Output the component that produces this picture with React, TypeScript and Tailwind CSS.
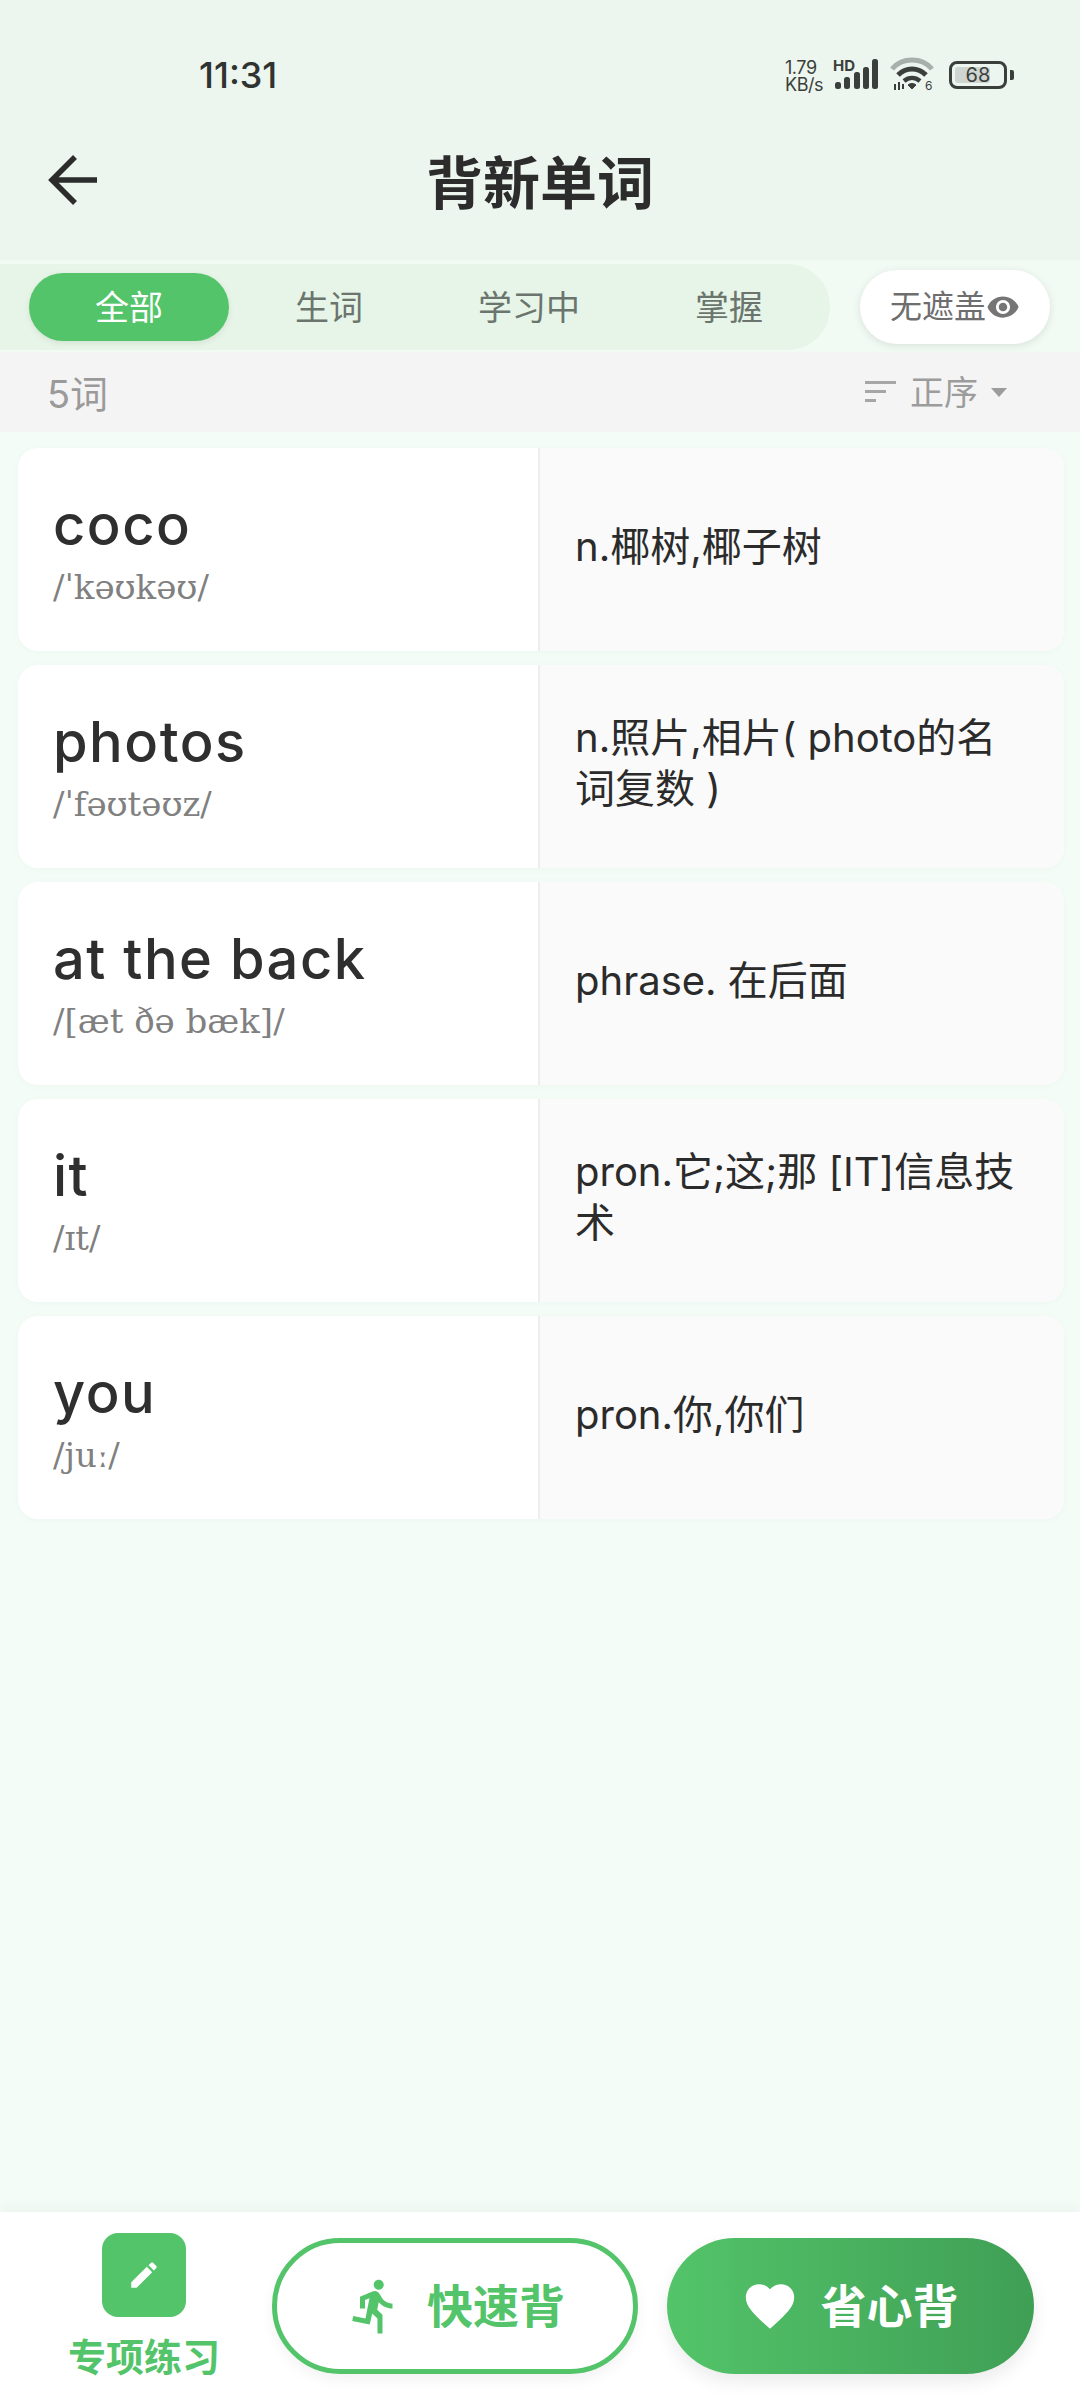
import { JSX } from "react";

const cjk = "font-['Inter','Noto_Sans_CJK_SC',sans-serif]";

const words = [
  { word: "coco", phonetic: "/ˈkəʊkəʊ/", mean: "n.椰树,椰子树" },
  { word: "photos", phonetic: "/ˈfəʊtəʊz/", mean: "n.照片,相片( photo的名词复数 )" },
  { word: "at the back", phonetic: "/[æt ðə bæk]/", mean: "phrase. 在后面" },
  { word: "it", phonetic: "/ɪt/", mean: "pron.它;这;那 [IT]信息技术" },
  { word: "you", phonetic: "/juː/", mean: "pron.你,你们" },
];

function StatusIcons(): JSX.Element {
  return (
    <div className="flex items-center text-[#3a3f3c]">
      <div className="flex flex-col text-[18px] leading-[17px] w-[46px] tracking-tight mt-[2px]">
        <span>1.79</span>
        <span>KB/s</span>
      </div>
      <svg width="48" height="36" viewBox="0 0 48 36" fill="currentColor">
        <text x="2" y="14" fontSize="15" fontWeight="700" fontFamily="Inter, sans-serif">HD</text>
        <rect x="4" y="25" width="6" height="7" rx="2.5" />
        <rect x="13" y="20" width="6" height="12" rx="2.5" />
        <rect x="23" y="15" width="6" height="17" rx="2.5" />
        <rect x="32" y="10" width="6" height="22" rx="2.5" />
        <rect x="41" y="2" width="6" height="30" rx="2.5" />
      </svg>
      <svg width="46" height="36" viewBox="0 0 46 36" className="ml-[11px]" fill="none" stroke="currentColor">
        <path d="M2 12 C12 0 32 0 42 12" strokeWidth="5" stroke="#a9afab" />
        <path d="M8 18 C16 10 28 10 36 18" strokeWidth="5" />
        <path d="M14 24 C19 20 25 20 30 24" strokeWidth="4.5" />
        <path d="M18 28 L22 32 L26 28 C24 26 20 26 18 28Z" fill="currentColor" strokeWidth="1" />
        <path d="M5 27v6M9 25v8M13 27v5" strokeWidth="2" />
        <text x="35" y="33" fontSize="12" fill="currentColor" stroke="none" fontFamily="Inter, sans-serif">6</text>
      </svg>
      <div className="ml-[13px] relative flex items-center justify-center w-[58px] h-[28px] rounded-[8px] border-[3px] border-[#3a3f3c]">
        <div className="absolute left-[3px] top-[3px] bottom-[3px] w-[35px] rounded-[3px] bg-[#cfd6d1]" />
        <span className="relative text-[20px] leading-none">68</span>
      </div>
      <div className="ml-[3px] w-[4px] h-[10px] rounded-r-[2px] bg-[#3a3f3c]" />
    </div>
  );
}

function WordCard({ word, phonetic, mean }: { word: string; phonetic: string; mean: string }): JSX.Element {
  return (
    <div className="flex h-[203px] rounded-[20px] overflow-hidden bg-white shadow-[0_1px_6px_rgba(60,120,80,0.04)]">
      <div className="w-[522px] pl-[35px] flex flex-col justify-center border-r-[2px] border-[#eeeeee]">
        <p className="text-[56px] leading-[64px] tracking-[1.5px] font-medium text-[#2f2f2f]">{word}</p>
        <p className="text-[34px] leading-[40px] mt-[10px] text-[#808080] font-['DejaVu_Serif',serif]">{phonetic}</p>
      </div>
      <div className="flex-1 bg-[#fafafa] pl-[35px] pr-[36px] flex items-center">
        <p className="text-[40px] leading-[51px] text-[#2b2b2b] mt-[-7px]">{mean}</p>
      </div>
    </div>
  );
}

export default function App(): JSX.Element {
  return (
    <div className={`${cjk} h-[2400px] flex flex-col bg-[#f4fcf7]`}>
      {/* header */}
      <div className="h-[260px] bg-[#ecf5ee] shrink-0">
        <div className="h-[150px] flex items-center justify-between pl-[199px] pr-[66px]">
          <span className="text-[36px] font-medium text-[#2f3331]">11:31</span>
          <StatusIcons />
        </div>
        <div className="relative flex items-center justify-center h-[62px] mt-[3px]">
          <svg width="56" height="56" viewBox="0 0 56 56" className="absolute left-[45px] top-[-1px]" fill="none" stroke="#2c2c2c" strokeWidth="5.5">
            <path d="M52 28H8M30 5 7 28l23 23" />
          </svg>
          <h1 className="text-[57px] font-bold text-[#2c2c2c]">背新单词</h1>
        </div>
      </div>
      {/* tabs */}
      <div className="h-[92px] shrink-0 bg-[#f1fbf4] flex items-center pt-[2px]">
        <div className="w-[830px] h-[86px] flex items-center pl-[29px] bg-[#e6f5e8] rounded-r-[42px] text-[34px] text-[#6b756e]">
          <div className="w-[200px] h-[68px] flex items-center justify-center rounded-full bg-[#53c469] text-white shadow-[0_2px_6px_rgba(0,0,0,0.08)]">全部</div>
          <div className="w-[200px] flex justify-center">生词</div>
          <div className="w-[200px] flex justify-center">学习中</div>
          <div className="w-[200px] flex justify-center">掌握</div>
        </div>
        <div className="ml-[30px] w-[190px] h-[74px] flex items-center justify-center rounded-full bg-white shadow-[0_2px_8px_rgba(0,0,0,0.1)] text-[32px] text-[#6e6e6e]">
          无遮盖
          <svg width="34" height="34" viewBox="0 0 24 24" fill="#757575">
            <path d="M12 4.5C7 4.5 2.7 7.6 1 12c1.7 4.4 6 7.5 11 7.5s9.3-3.1 11-7.5c-1.7-4.4-6-7.5-11-7.5zM12 17a5 5 0 1 1 0-10 5 5 0 0 1 0 10zm0-8a3 3 0 1 0 0 6 3 3 0 0 0 0-6z" />
          </svg>
        </div>
      </div>
      {/* count and sort */}
      <div className="h-[80px] shrink-0 bg-[#f4f4f4] flex items-center justify-between pl-[47px] pr-[73px]">
        <span className="text-[38px] text-[#9a9a9a] mt-[4px]">5词</span>
        <div className="flex items-center text-[34px] text-[#9c9c9c]">
          <svg width="32" height="24" viewBox="0 0 32 24" fill="#a6a6a6">
            <rect y="1" width="31" height="3" />
            <rect y="10" width="21" height="3" />
            <rect y="19" width="11" height="3" />
          </svg>
          <span className="ml-[13px]">正序</span>
          <svg width="16" height="9" viewBox="0 0 16 9" fill="#9c9c9c" className="ml-[13px]">
            <path d="M0 0h16L8 9z" />
          </svg>
        </div>
      </div>
      {/* word list */}
      <div className="flex-1 flex flex-col gap-[14px] pl-[18px] pr-[16px] pt-[16px]">
        {words.map((w) => (
          <WordCard key={w.word} {...w} />
        ))}
      </div>
      {/* bottom bar */}
      <div className="h-[188px] shrink-0 bg-white flex items-start shadow-[0_-4px_12px_rgba(0,0,0,0.04)] pl-[68px]">
        <div className="flex flex-col items-center mt-[21px] w-[152px]">
          <div className="w-[84px] h-[84px] rounded-[16px] bg-[#53c469] flex items-center justify-center">
            <svg width="34" height="34" viewBox="0 0 24 24" fill="#fff">
              <path d="M3 17.2V21h3.8L17.8 10 14 6.2 3 17.2zM20.7 7a1 1 0 0 0 0-1.4l-2.3-2.3a1 1 0 0 0-1.4 0l-1.8 1.8 3.8 3.8L20.7 7z" />
            </svg>
          </div>
          <span className="mt-[18px] text-[38px] leading-[44px] font-bold text-[#53c469] whitespace-nowrap">专项练习</span>
        </div>
        <div className="ml-[52px] mt-[26px] w-[366px] h-[136px] rounded-full border-[5px] border-[#53c469] bg-white flex items-center justify-center text-[#53c469] shadow-[0_6px_14px_rgba(0,0,0,0.05)]">
          <svg width="60" height="60" viewBox="0 0 24 24" fill="#53c469">
            <path d="M13.49 5.48c1.1 0 2-.9 2-2s-.9-2-2-2-2 .9-2 2 .9 2 2 2zm-3.6 13.9l1-4.4 2.1 2v6h2v-7.5l-2.1-2 .6-3c1.3 1.5 3.3 2.5 5.5 2.5v-2c-1.9 0-3.5-1-4.3-2.4l-1-1.6c-.4-.6-1-1-1.7-1-.3 0-.5.1-.8.1l-5.2 2.2v4.7h2v-3.4l1.8-.7-1.6 8.1-4.9-1-.4 2 7 1.4z" />
          </svg>
          <span className="ml-[22px] text-[46px] font-bold">快速背</span>
        </div>
        <div className="ml-[29px] mt-[26px] w-[367px] h-[136px] rounded-full bg-linear-to-r from-[#53c469] to-[#3f9f55] flex items-center justify-center text-white shadow-[0_8px_18px_rgba(0,0,0,0.08)]">
          <svg width="58" height="58" viewBox="0 0 24 24" fill="#fff" className="ml-[-2px]">
            <path d="m12 21.4-1.5-1.3C5.4 15.4 2 12.3 2 8.5A5.4 5.4 0 0 1 7.5 3c1.7 0 3.4.8 4.5 2.1A6 6 0 0 1 16.5 3 5.4 5.4 0 0 1 22 8.5c0 3.8-3.4 6.9-8.5 11.6L12 21.4z" />
          </svg>
          <span className="ml-[22px] text-[46px] font-bold">省心背</span>
        </div>
      </div>
    </div>
  );
}
